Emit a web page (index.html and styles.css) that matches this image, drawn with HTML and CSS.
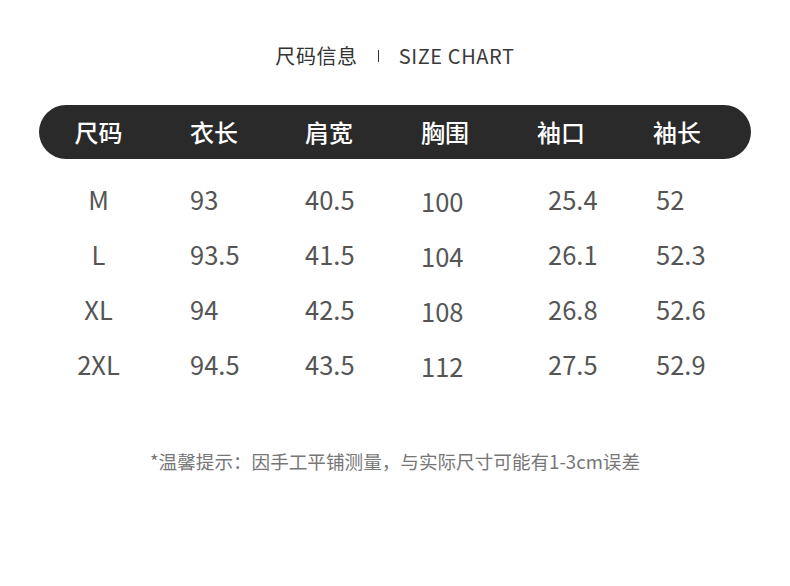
FILE: index.html
```html
<!DOCTYPE html>
<html lang="zh">
<head>
<meta charset="utf-8">
<title>尺码信息</title>
<link rel="stylesheet" href="styles.css">
</head>
<body>
<main class="page">
  <h1 class="title">
    <span class="title-cn">尺码信息</span>
    <span class="title-sep"></span>
    <span class="title-en">SIZE CHART</span>
  </h1>
  <div class="bar">
    <div class="bar-row">
      <span class="cell size">尺码</span>
      <span class="cell">衣长</span>
      <span class="cell">肩宽</span>
      <span class="cell">胸围</span>
      <span class="cell">袖口</span>
      <span class="cell">袖长</span>
    </div>
  </div>
  <div class="rows">
    <div class="row">
      <span class="cell size">M</span><span class="cell">93</span><span class="cell">40.5</span><span class="cell chest">100</span><span class="cell">25.4</span><span class="cell">52</span>
    </div>
    <div class="row">
      <span class="cell size">L</span><span class="cell">93.5</span><span class="cell">41.5</span><span class="cell chest">104</span><span class="cell">26.1</span><span class="cell">52.3</span>
    </div>
    <div class="row">
      <span class="cell size">XL</span><span class="cell">94</span><span class="cell">42.5</span><span class="cell chest">108</span><span class="cell">26.8</span><span class="cell">52.6</span>
    </div>
    <div class="row">
      <span class="cell size">2XL</span><span class="cell">94.5</span><span class="cell">43.5</span><span class="cell chest">112</span><span class="cell">27.5</span><span class="cell">52.9</span>
    </div>
  </div>
  <p class="note">*温馨提示：因手工平铺测量，与实际尺寸可能有1-3cm误差</p>
</main>
</body>
</html>
```

FILE: styles.css
```css
html, body {
  margin: 0;
  padding: 0;
  background: #ffffff;
}

body {
  font-family: "Noto Sans CJK SC", "Noto Sans", sans-serif;
  width: 790px;
  height: 586px;
  overflow: hidden;
}

.page {
  display: flex;
  flex-direction: column;
  padding-top: 40px;
}

.title {
  margin: 0;
  height: 32px;
  display: flex;
  align-items: center;
  justify-content: center;
  font-size: 20px;
  font-weight: 400;
  color: #333333;
  line-height: 32px;
}

.title-cn {
  letter-spacing: 0.6px;
}

.title-sep {
  width: 1px;
  height: 12px;
  background: #333333;
  margin: 0 20px 0 20px;
}

.title-en {
  letter-spacing: 0.6px;
  color: #3a3a3a;
}

.bar {
  margin: 33px 39px 0 39px;
  height: 54px;
  border-radius: 27px;
  background: #2a2a2a;
}

.bar-row {
  display: grid;
  grid-template-columns: 151px 115px 116px 116px 116px 1fr;
  height: 54px;
  align-items: center;
  color: #ffffff;
  font-size: 24px;
  font-weight: 500;
  line-height: 54px;
}

.rows {
  margin: 12px 39px 0 39px;
  display: flex;
  flex-direction: column;
}

.row {
  display: grid;
  grid-template-columns: 151px 115px 116px 127px 108px 1fr;
  height: 55px;
  line-height: 55px;
  font-size: 25.5px;
  color: #555555;
}

.cell {
  white-space: nowrap;
}

.size {
  width: 119px;
  text-align: center;
}

.chest {
  padding-top: 2px;
}

.note {
  margin: 58px 0 0 0;
  text-align: center;
  font-size: 18.6px;
  line-height: 24px;
  color: #777777;
}
```
